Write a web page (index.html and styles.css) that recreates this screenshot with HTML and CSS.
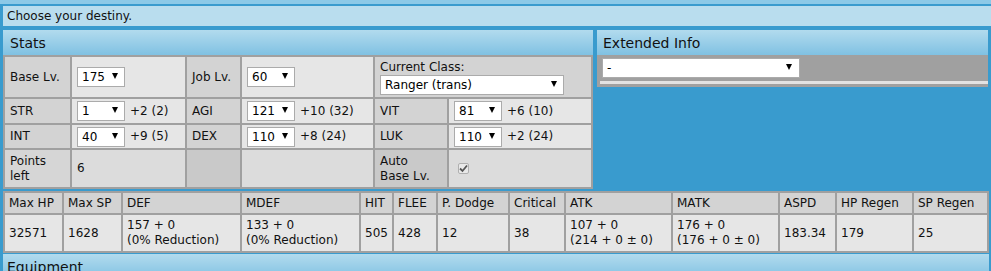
FILE: index.html
```html
<!DOCTYPE html>
<html>
<head>
<meta charset="utf-8">
<link rel="stylesheet" href="styles.css">
</head>
<body>
<div class="top-strip"></div>
<div class="notice">Choose your destiny.</div>
<div class="main">
  <section class="panel stats-panel">
    <h2 class="phead">Stats</h2>
    <table class="stats-table">
      <colgroup>
        <col class="c1"><col class="c2"><col class="c3"><col class="c4"><col class="c5"><col class="c6">
      </colgroup>
      <tr class="r1">
        <th>Base Lv.</th>
        <td><span class="sel s-lv"><select><option>175</option></select></span></td>
        <th>Job Lv.</th>
        <td><span class="sel s-lv"><select><option>60</option></select></span></td>
        <th colspan="2" class="cls-cell"><div class="cls-label">Current Class:</div><span class="sel s-cls"><select><option>Ranger (trans)</option></select></span></th>
      </tr>
      <tr class="r2">
        <th>STR</th>
        <td><span class="sel s-lv"><select><option>1</option></select></span><span class="bonus">+2 (2)</span></td>
        <th>AGI</th>
        <td><span class="sel s-lv"><select><option>121</option></select></span><span class="bonus">+10 (32)</span></td>
        <th>VIT</th>
        <td><span class="sel s-lv"><select><option>81</option></select></span><span class="bonus">+6 (10)</span></td>
      </tr>
      <tr class="r3">
        <th>INT</th>
        <td><span class="sel s-lv"><select><option>40</option></select></span><span class="bonus">+9 (5)</span></td>
        <th>DEX</th>
        <td><span class="sel s-lv"><select><option>110</option></select></span><span class="bonus">+8 (24)</span></td>
        <th>LUK</th>
        <td><span class="sel s-lv"><select><option>110</option></select></span><span class="bonus">+2 (24)</span></td>
      </tr>
      <tr class="r4">
        <th class="pl">Points left</th>
        <td>6</td>
        <th class="empty"></th>
        <td></td>
        <th class="empty auto">Auto<br>Base Lv.</th>
        <td><span class="chk"><svg width="9" height="9" viewBox="0 0 9 9"><path d="M1 4.5 L3.5 7 L8 1.5" fill="none" stroke="#555" stroke-width="1.8"/></svg></span></td>
      </tr>
    </table>
  </section>
  <section class="panel ext-panel">
    <h2 class="phead">Extended Info</h2>
    <div class="ext-body">
      <span class="sel s-ext"><select><option>-</option></select></span>
      <div class="ext-line"></div>
    </div>
  </section>
</div>
<table class="derived">
  <colgroup>
    <col style="width:57px"><col style="width:57px"><col style="width:117px"><col style="width:117px"><col style="width:31px"><col style="width:42px"><col style="width:70px"><col style="width:54px"><col style="width:105px"><col style="width:105px"><col style="width:55px"><col style="width:75px"><col style="width:73px">
  </colgroup>
  <tr class="dh">
    <th>Max HP</th><th>Max SP</th><th>DEF</th><th>MDEF</th><th>HIT</th><th>FLEE</th><th>P. Dodge</th><th>Critical</th><th>ATK</th><th>MATK</th><th>ASPD</th><th>HP Regen</th><th>SP Regen</th>
  </tr>
  <tr class="dd">
    <td>32571</td><td>1628</td><td>157 + 0<br>(0% Reduction)</td><td>133 + 0<br>(0% Reduction)</td><td>505</td><td>428</td><td>12</td><td>38</td><td>107 + 0<br>(214 + 0 ± 0)</td><td>176 + 0<br>(176 + 0 ± 0)</td><td>183.34</td><td>179</td><td>25</td>
  </tr>
</table>
<div class="phead equip">Equipment</div>
</body>
</html>
```
FILE: styles.css
```css
html, body {
  margin: 0;
  padding: 0;
}
body {
  background: #399bce;
  font-family: "DejaVu Sans", Verdana, sans-serif;
  font-size: 12px;
  color: #111;
  overflow: hidden;
}
.top-strip {
  height: 4px;
  background: #8cc9e7;
}
.notice {
  margin: 2px 0 0 3px;
  height: 20px;
  line-height: 20px;
  padding-left: 4px;
  background: #b9ddee;
}
.main {
  display: flex;
  align-items: flex-start;
  gap: 4px;
  margin: 4px 0 0 3px;
}
.panel {
  display: flex;
  flex-direction: column;
}
.stats-panel { width: 590px; }
.ext-panel { width: 391px; }
.phead {
  margin: 0;
  height: 25px;
  box-sizing: border-box;
  padding: 2px 0 0 7px;
  line-height: 23px;
  font-size: 14px;
  font-weight: normal;
  color: #111;
  background: linear-gradient(#b2dbee, #80c1e2);
}
.ext-panel .phead { padding-left: 6px; }
.stats-table, .derived {
  border-collapse: separate;
  border-spacing: 2px;
  background: #a0a0a0;
  table-layout: fixed;
}
.stats-table { width: 590px; }
.c1 { width: 65px; }
.c2 { width: 113px; }
.c3 { width: 53px; }
.c4 { width: 131px; }
.c5 { width: 72px; }
.c6 { width: 142px; }
.stats-table th, .stats-table td {
  padding: 0 5px;
  line-height: 15px;
  font-weight: normal;
  text-align: left;
  vertical-align: middle;
  white-space: normal;
}
.stats-table th { background: #d3d3d3; }
.stats-table td { background: #e6e6e6; }
.r1 { height: 40px; }
.r2 { height: 24px; }
.r3 { height: 23px; }
.r4 { height: 37px; }
.stats-table .r4 th.pl { background: #d6d6d6; }
.stats-table .r4 td { background: #dcdcdc; }
.stats-table .r4 th.empty { background: #c9c9c9; }
.cls-cell { padding-top: 0; }
.cls-label { line-height: 15px; }
.sel {
  position: relative;
  display: inline-block;
  vertical-align: middle;
}
.sel select {
  appearance: none;
  -webkit-appearance: none;
  display: block;
  box-sizing: border-box;
  height: 20px;
  margin: 0;
  padding: 0 4px;
  border: 1px solid #ababab;
  border-radius: 0;
  background: #fff;
  font-family: "DejaVu Sans", Verdana, sans-serif;
  font-size: 12px;
  color: #000;
}
.sel::after {
  content: "";
  position: absolute;
  top: 6px;
  right: 7px;
  width: 0;
  height: 0;
  border-left: 3px solid transparent;
  border-right: 3px solid transparent;
  border-top: 6px solid #000;
  pointer-events: none;
}
.s-lv select { width: 48px; }
.s-cls select { width: 184px; }
.s-ext select { width: 198px; }
.s-ext::after { right: 8px; }
.bonus {
  margin-left: 5px;
  vertical-align: middle;
}
.chk {
  display: inline-flex;
  align-items: center;
  justify-content: center;
  box-sizing: border-box;
  width: 11px;
  height: 11px;
  margin-left: 4px;
  border: 1px solid #b0b0b0;
  border-radius: 2px;
  background: #e9e9e9;
  vertical-align: middle;
}
.ext-body {
  background: #a0a0a0;
  padding: 3px 0 3px 3px;
}
.s-ext { margin-left: 2px; }
.ext-line {
  height: 3px;
  margin-top: 3px;
  background: #e2e2e2;
}
.derived {
  width: 986px;
  margin: 2px 0 0 3px;
}
.derived th, .derived td {
  padding: 0 4px;
  line-height: 15px;
  font-weight: normal;
  text-align: left;
  vertical-align: middle;
  white-space: nowrap;
  overflow: hidden;
}
.derived th { background: #d3d3d3; }
.derived td { background: #e6e6e6; }
.dh { height: 20px; }
.dd { height: 36px; }
.equip {
  margin: 1px 0 0 3px;
  width: 986px;
  box-sizing: border-box;
  padding-left: 4px;
}
```
